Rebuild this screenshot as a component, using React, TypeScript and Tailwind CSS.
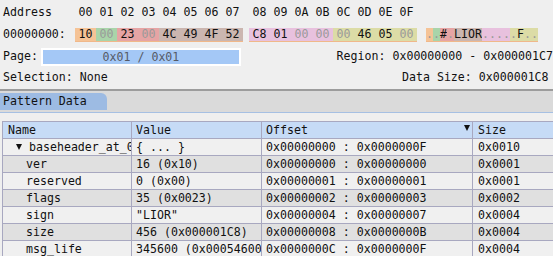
import React from 'react';

const HEAD = ['00', '01', '02', '03', '04', '05', '06', '07', '08', '09', '0A', '0B', '0C', '0D', '0E', '0F'];

// byte value + pattern colour
const BYTES: [string, string][] = [
  ['10', 'bg-[#f5c396]'],
  ['00', 'bg-[#a9d4a9]'],
  ['23', 'bg-[#e6a4a4]'],
  ['00', 'bg-[#e6a4a4]'],
  ['4C', 'bg-[#cbb6b0]'],
  ['49', 'bg-[#cbb6b0]'],
  ['4F', 'bg-[#cbb6b0]'],
  ['52', 'bg-[#cbb6b0]'],
  ['C8', 'bg-[#e8c1de]'],
  ['01', 'bg-[#e8c1de]'],
  ['00', 'bg-[#e8c1de]'],
  ['00', 'bg-[#e8c1de]'],
  ['00', 'bg-[#dcdca6]'],
  ['46', 'bg-[#dcdca6]'],
  ['05', 'bg-[#dcdca6]'],
  ['00', 'bg-[#dcdca6]'],
];

const ASCII = ['.', '.', '#', '.', 'L', 'I', 'O', 'R', '.', '.', '.', '.', '.', 'F', '.', '.'];

const ROWS = [
  { name: 'baseheader_at_0x0', value: '{ ... }', offset: '0x00000000 : 0x0000000F', size: '0x0010', parent: true },
  { name: 'ver', value: '16 (0x10)', offset: '0x00000000 : 0x00000000', size: '0x0001' },
  { name: 'reserved', value: '0 (0x00)', offset: '0x00000001 : 0x00000001', size: '0x0001' },
  { name: 'flags', value: '35 (0x0023)', offset: '0x00000002 : 0x00000003', size: '0x0002' },
  { name: 'sign', value: '"LIOR"', offset: '0x00000004 : 0x00000007', size: '0x0004' },
  { name: 'size', value: '456 (0x000001C8)', offset: '0x00000008 : 0x0000000B', size: '0x0004' },
  { name: 'msg_life', value: '345600 (0x00054600)', offset: '0x0000000C : 0x0000000F', size: '0x0004' },
];

function ByteCell({ b, bg }: { b: string; bg: string }) {
  return (
    <div className={`w-[21px] h-[13px] leading-[13px] text-center ${bg} ${b === '00' ? 'text-[#9a9a9a]' : ''}`}>
      {b}
    </div>
  );
}

function HexRow() {
  return (
    <div className="flex mt-[9px]">
      <div className="w-[75px] pl-[3px] h-[13px] leading-[13px]">00000000:</div>
      <div className="flex border-b border-[#f0b88a]">
        {BYTES.slice(0, 8).map(([b, bg], i) => (
          <ByteCell key={i} b={b} bg={bg} />
        ))}
      </div>
      <div className="w-[6px]" />
      <div className="flex border-b border-[#f0b88a]">
        {BYTES.slice(8).map(([b, bg], i) => (
          <ByteCell key={i} b={b} bg={bg} />
        ))}
      </div>
      <div className="w-[9px]" />
      <div className="flex border-b border-[#f0b88a]">
        {ASCII.map((c, i) => (
          <div
            key={i}
            className={`w-[7px] h-[13px] leading-[13px] text-center ${BYTES[i][1]} ${c === '.' ? 'text-[#9a9a9a]' : ''}`}
          >
            {c}
          </div>
        ))}
      </div>
    </div>
  );
}

function Cell({ children, className = '' }: { children?: React.ReactNode; className?: string }) {
  return (
    <div
      className={`h-[17px] leading-[16px] border-r border-b border-[#a8a8c0] overflow-hidden whitespace-nowrap pl-[4px] ${className}`}
    >
      {children}
    </div>
  );
}

export default function App() {
  return (
    <div className="w-[553px] h-[256px] overflow-hidden bg-[#efefef] text-[#111] font-['DejaVu_Sans_Mono',monospace] text-[11.6px] whitespace-nowrap">
      {/* Hex view header */}
      <div className="pt-[5px]">
        <div className="flex h-[14px] leading-[14px]">
          <div className="w-[75px] pl-[3px]">Address</div>
          <div className="flex">
            {HEAD.slice(0, 8).map((h) => (
              <div key={h} className="w-[21px] text-center">{h}</div>
            ))}
          </div>
          <div className="w-[6px]" />
          <div className="flex">
            {HEAD.slice(8).map((h) => (
              <div key={h} className="w-[21px] text-center">{h}</div>
            ))}
          </div>
        </div>
        <HexRow />
      </div>

      {/* Page / region */}
      <div className="flex items-center h-[18px] mt-[6px]">
        <div className="w-[52px] pl-[3px]">Page:</div>
        <div className="w-[254px] h-[18px] bg-white p-[2px]">
          <div className="h-full bg-[#a4c8f6] text-[#555a66] text-center leading-[14px]">0x01 / 0x01</div>
        </div>
        <div className="ml-[96px]">Region: 0x00000000 - 0x000001C7</div>
      </div>
      <div className="flex h-[14px] leading-[14px] mt-[4px]">
        <div className="w-[402px] pl-[3px]">Selection: None</div>
        <div>Data Size: 0x000001C8</div>
      </div>

      {/* Pattern data tab */}
      <div className="mt-[5px] h-[2px] bg-[#9c9c9c]" />
      <div className="h-[19px] bg-[#dadada] pt-[2px] border-b border-[#a6c0e3] box-content">
        <div className="w-[107px] h-[17px] bg-[#9dbbe3] rounded-tr-[6px] pl-[3px] leading-[17px]">Pattern Data</div>
      </div>

      {/* Table */}
      <div className="mt-[8px] ml-[2px] w-[700px] border-l border-t border-[#a8a8c0] grid grid-cols-[129px_130px_211px_229px]">
        <Cell className="bg-[#c6dbf6] !pl-[5px]">Name</Cell>
        <Cell className="bg-[#c6dbf6]">Value</Cell>
        <Cell className="bg-[#c6dbf6] flex justify-between pr-[2px]">
          <span>Offset</span>
          <svg width="6" height="6" viewBox="0 0 6 6" className="mt-[3px] shrink-0">
            <path d="M0 0H6L3 6Z" fill="#111" />
          </svg>
        </Cell>
        <Cell className="bg-[#c6dbf6] !pl-[5px]">Size</Cell>
        {ROWS.map((r, i) => {
          const bg = i % 2 === 0 ? 'bg-[#f0f0f0]' : 'bg-[#e0e0e0]';
          return (
            <React.Fragment key={r.name}>
              <Cell className={bg}>
                {r.parent ? (
                  <div className="flex items-center h-[16px]">
                    <svg width="6" height="6" viewBox="0 0 6 6" className="shrink-0 ml-[9px] mr-[7px]">
                      <path d="M0 0H6L3 6Z" fill="#111" />
                    </svg>
                    <span className="shrink-0">{r.name}</span>
                  </div>
                ) : (
                  <span className="pl-[19px]">{r.name}</span>
                )}
              </Cell>
              <Cell className={bg}>{r.value}</Cell>
              <Cell className={bg}>{r.offset}</Cell>
              <Cell className={`${bg} !pl-[5px]`}>{r.size}</Cell>
            </React.Fragment>
          );
        })}
      </div>
    </div>
  );
}
